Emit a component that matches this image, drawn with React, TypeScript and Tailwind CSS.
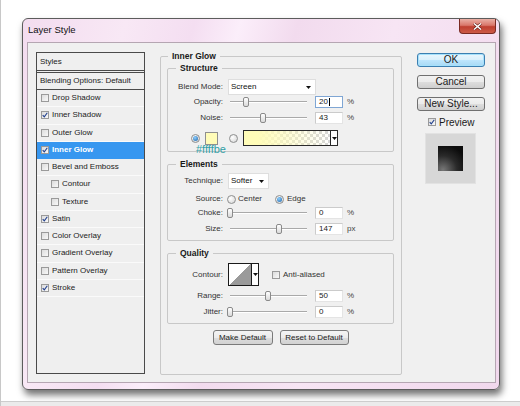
import React from "react";

type StyleItem = { label: string; checked: boolean; indent?: boolean; active?: boolean };

const STYLE_ITEMS: StyleItem[] = [
  { label: "Drop Shadow", checked: false },
  { label: "Inner Shadow", checked: true },
  { label: "Outer Glow", checked: false },
  { label: "Inner Glow", checked: true, active: true },
  { label: "Bevel and Emboss", checked: false },
  { label: "Contour", checked: false, indent: true },
  { label: "Texture", checked: false, indent: true },
  { label: "Satin", checked: true },
  { label: "Color Overlay", checked: false },
  { label: "Gradient Overlay", checked: false },
  { label: "Pattern Overlay", checked: false },
  { label: "Stroke", checked: true },
];

function Check({ checked, className = "" }: { checked: boolean; className?: string }) {
  return (
    <span
      className={`flex h-[8px] w-[8px] shrink-0 items-center justify-center border border-[#9a9a9a] bg-[linear-gradient(135deg,#dcdcdc,#f8f8f8)] ${className}`}
    >
      {checked && (
        <svg width="6" height="6" viewBox="0 0 6 6">
          <path d="M0.7 3.1 L2.3 4.9 L5.3 0.7" fill="none" stroke="#22418f" strokeWidth="1.1" />
        </svg>
      )}
    </span>
  );
}

function Radio({ on, className = "" }: { on?: boolean; className?: string }) {
  return (
    <span
      className={`flex h-[9px] w-[9px] shrink-0 items-center justify-center rounded-full border border-[#8e8f8f] bg-[radial-gradient(circle_at_35%_35%,#ffffff,#d3d3d3)] ${className}`}
    >
      {on && <span className="h-[5px] w-[5px] rounded-full bg-[radial-gradient(circle_at_40%_35%,#8fd0ff,#1b62a8)]" />}
    </span>
  );
}

function Arrow() {
  return (
    <svg width="5" height="3" viewBox="0 0 5 3">
      <path d="M0 0h5L2.5 3z" fill="#111" />
    </svg>
  );
}

function Slider({ pos }: { pos: number }) {
  return (
    <div className="relative h-[12px] w-[77px]">
      <div className="absolute left-0 right-0 top-[5px] h-[2px] border-t border-b border-t-[#a9a9a9] border-b-white" />
      <div
        className="absolute top-[1px] h-[10px] w-[6px] -translate-x-1/2 rounded-[2px] border border-[#8a8a8a] bg-[linear-gradient(#ffffff,#d9d9d9)]"
        style={{ left: `${pos * 100}%` }}
      />
    </div>
  );
}

function Field({ value, focused }: { value: string; focused?: boolean }) {
  return (
    <div
      className={`flex h-[12px] w-[28px] items-center border bg-white pl-[3px] text-[8px] leading-none text-[#222] ${
        focused ? "border-[#7fa6d4]" : "border-[#e4e4e4] border-l-[#cbcbcb] border-t-[#cbcbcb]"
      }`}
    >
      {value}
      {focused && <span className="ml-px h-[8px] w-px bg-black" />}
    </div>
  );
}

function SliderRow({
  label,
  value,
  pos,
  unit,
  focused,
  className = "",
}: {
  label: string;
  value: string;
  pos: number;
  unit: string;
  focused?: boolean;
  className?: string;
}) {
  return (
    <div className={`flex h-[12px] items-center ${className}`}>
      <span className="w-[55px] text-right">{label}</span>
      <div className="ml-[7px]">
        <Slider pos={pos} />
      </div>
      <div className="ml-[8px]">
        <Field value={value} focused={focused} />
      </div>
      <span className="ml-[4px] text-[#444]">{unit}</span>
    </div>
  );
}

function Legend({ children, className = "" }: { children: React.ReactNode; className?: string }) {
  return (
    <legend className={`px-[4px] text-[8.5px] font-bold leading-[10px] text-[#1a1a1a] ${className}`}>{children}</legend>
  );
}

function SmallButton({ children, className = "" }: { children: React.ReactNode; className?: string }) {
  return (
    <div
      className={`flex h-[15px] items-center justify-center rounded-[3px] border border-[#7a7a7a] bg-[linear-gradient(#f4f4f4_0%,#ebebeb_50%,#dddddd_51%,#d2d2d2_100%)] text-[8px] text-[#222] ${className}`}
    >
      {children}
    </div>
  );
}

function WinButton({ children, primary, className = "" }: { children: React.ReactNode; primary?: boolean; className?: string }) {
  return (
    <div
      className={`flex h-[14px] w-[68px] items-center justify-center rounded-[3px] border text-[10px] leading-none text-[#1a1a1a] ${
        primary
          ? "border-[#3c7fb1] bg-[linear-gradient(#eaf6fd_0%,#d9f0fc_50%,#bee6fd_51%,#a7d9f5_100%)] shadow-[inset_0_0_0_1px_#a6e1fb]"
          : "border-[#707070] bg-[linear-gradient(#f2f2f2_0%,#ebebeb_50%,#dddddd_51%,#cfcfcf_100%)]"
      } ${className}`}
    >
      {children}
    </div>
  );
}

function StylesList() {
  return (
    <div className="flex h-[322px] w-[109px] shrink-0 flex-col border border-[#4a4a4a] bg-[#efefef] text-[8px] text-[#222]">
      <div className="flex h-[20px] items-center border-b-[3px] border-double border-[#4a4a4a] pl-[3px]">Styles</div>
      <div className="flex h-[17px] items-center border-b border-[#4a4a4a] pl-[3px]">Blending Options: Default</div>
      {STYLE_ITEMS.map((item) => (
        <div
          key={item.label}
          className={`flex h-[17.25px] items-center border-b ${
            item.active ? "border-[#3797f0] bg-[#3797f0] font-bold text-white" : "border-white/70"
          } ${item.indent ? "pl-[14px]" : "pl-[4px]"}`}
        >
          <Check checked={item.checked} className={item.active ? "bg-white" : ""} />
          <span className="ml-[3px]">{item.label}</span>
        </div>
      ))}
    </div>
  );
}

function InnerGlowPanel() {
  return (
    <fieldset className="ml-[15px] -mt-[1px] h-[324px] w-[242px] shrink-0 rounded-[2px] border border-[#c8c8c8] pl-[6px] text-[8px] text-[#333]">
      <Legend className="ml-[1px]">Inner Glow</Legend>

      <fieldset className="mt-[2px] w-[227px] rounded-[2px] border border-[#c8c8c8] pb-[5px]">
        <Legend className="ml-[8px]">Structure</Legend>
        <div className="mt-[6px] flex h-[16px] items-center">
          <span className="w-[55px] text-right">Blend Mode:</span>
          <div className="ml-[5px] flex h-[16px] w-[88px] items-center justify-between border border-[#dedede] bg-white pl-[2px] pr-[4px] text-[#111]">
            <span>Screen</span>
            <Arrow />
          </div>
        </div>
        <SliderRow className="mt-[1px]" label="Opacity:" value="20" pos={0.21} unit="%" focused />
        <SliderRow className="mt-[4px]" label="Noise:" value="43" pos={0.43} unit="%" />
        <div className="relative mt-[6px] flex h-[16px] items-center">
          <Radio on className="ml-[23px]" />
          <span className="ml-[5px] h-[13px] w-[13px] border border-[#8f8f8f] bg-[#fffcb8]" />
          <Radio className="ml-[11px]" />
          <div className="ml-[5px] flex h-[16px] w-[95px] border border-[#2a2a2a]">
            <div className="flex-1 bg-[repeating-conic-gradient(#d6d6d6_0_25%,#ffffff_0_50%)] bg-[length:6px_6px]">
              <div className="h-full w-full bg-[linear-gradient(to_right,#fffcb8_0%,#fffcb8_15%,rgba(255,252,184,0)_100%)]" />
            </div>
            <div className="flex w-[7px] items-center justify-center border-l border-[#2a2a2a] bg-white">
              <Arrow />
            </div>
          </div>
          <span className="absolute left-[28px] top-[14px] font-['Liberation_Sans',Arial,sans-serif] text-[11px] leading-[11px] text-[#2f9fa6]">
            #ffffbe
          </span>
        </div>
      </fieldset>

      <fieldset className="mt-[7px] w-[227px] rounded-[2px] border border-[#c8c8c8] pb-[5px]">
        <Legend className="ml-[8px]">Elements</Legend>
        <div className="mt-[4px] flex h-[16px] items-center">
          <span className="w-[55px] text-right">Technique:</span>
          <div className="ml-[5px] flex h-[16px] w-[41px] items-center justify-between border border-[#dedede] bg-white pl-[2px] pr-[4px] text-[#111]">
            <span>Softer</span>
            <Arrow />
          </div>
        </div>
        <div className="mt-[5px] flex h-[10px] items-center">
          <span className="w-[55px] text-right">Source:</span>
          <Radio className="ml-[4px]" />
          <span className="ml-[2px]">Center</span>
          <Radio on className="ml-[13px]" />
          <span className="ml-[3px]">Edge</span>
        </div>
        <SliderRow className="mt-[3px]" label="Choke:" value="0" pos={0} unit="%" />
        <SliderRow className="mt-[4px]" label="Size:" value="147" pos={0.64} unit="px" />
      </fieldset>

      <fieldset className="mt-[7px] w-[227px] rounded-[2px] border border-[#c8c8c8] pb-[5px]">
        <Legend className="ml-[8px]">Quality</Legend>
        <div className="mt-[5px] flex h-[23px] items-center">
          <span className="w-[55px] text-right">Contour:</span>
          <div className="ml-[5px] flex h-[23px] w-[31px] border border-[#1a1a1a] bg-white">
            <div className="w-[22px] bg-[linear-gradient(to_top_left,#9a9a9a_50%,#ffffff_50%)]" />
            <div className="flex flex-1 items-center justify-center border-l border-[#1a1a1a]">
              <Arrow />
            </div>
          </div>
          <Check checked={false} className="ml-[13px]" />
          <span className="ml-[3px]">Anti-aliased</span>
        </div>
        <SliderRow className="mt-[4px]" label="Range:" value="50" pos={0.49} unit="%" />
        <SliderRow className="mt-[4px]" label="Jitter:" value="0" pos={0} unit="%" />
      </fieldset>

      <div className="mt-[6px] flex w-[227px] justify-center gap-[7px]">
        <SmallButton className="w-[60px]">Make Default</SmallButton>
        <SmallButton className="w-[69px]">Reset to Default</SmallButton>
      </div>
    </fieldset>
  );
}

function ActionColumn() {
  return (
    <div className="ml-[15px] mt-[1px] flex w-[68px] shrink-0 flex-col">
      <WinButton primary>OK</WinButton>
      <WinButton className="mt-[8px]">Cancel</WinButton>
      <WinButton className="mt-[8px]">New Style...</WinButton>
      <div className="mt-[6px] flex h-[10px] items-center pl-[11px] text-[10px] text-[#1a1a1a]">
        <Check checked />
        <span className="ml-[3px]">Preview</span>
      </div>
      <div className="ml-[8px] mt-[6px] flex h-[51px] w-[51px] items-center justify-center border border-[#e2e2e2] bg-[#d7d7d7]">
        <div className="h-[25px] w-[25px] bg-[radial-gradient(circle_at_20%_95%,#777777_0%,#2a2a2a_45%,#0c0c0c_80%)]" />
      </div>
    </div>
  );
}

export default function App() {
  return (
    <div className="relative flex h-[406px] w-[520px] flex-col overflow-hidden border-l border-[#c8c8c8] bg-white font-['Liberation_Sans',Arial,sans-serif]">
      <div className="ml-[21px] mt-[18px]">
        <div className="flex h-[372px] w-[478px] flex-col rounded-[6px] border border-[#5c5c5c] bg-[linear-gradient(105deg,#f3dcef_0%,#f8e8f5_18%,#f4def1_30%,#fbeefa_38%,#f2dbee_48%,#f7e5f4_65%,#f1d8ed_100%)] shadow-[2px_5px_7px_rgba(0,0,0,0.55)]">
          <div className="flex h-[23px] items-start justify-between">
            <span className="ml-[5px] mt-[5px] text-[9.5px] leading-[12px] text-[#111]">Layer Style</span>
            <div className="mr-[3px] flex h-[15px] w-[37px] items-center justify-center rounded-b-[4px] border border-t-0 border-[#7a2a22] bg-[linear-gradient(#eab0a6_0%,#d9776a_45%,#bf4030_55%,#cc5a46_100%)]">
              <svg width="9" height="7" viewBox="0 0 9 7">
                <path d="M1 0.5 L8 6.5 M8 0.5 L1 6.5" stroke="#5a1a14" strokeWidth="2.6" />
                <path d="M1 0.5 L8 6.5 M8 0.5 L1 6.5" stroke="#ffffff" strokeWidth="1.5" />
              </svg>
            </div>
          </div>
          <div className="ml-[4px] flex h-[341px] w-[469px] border border-[#b5a6b2] bg-[#f0f0f0] pl-[8px] pt-[9px]">
            <StylesList />
            <InnerGlowPanel />
            <ActionColumn />
          </div>
        </div>
      </div>
      <div className="mt-auto h-[5px] border-t border-[#cdcdcd] bg-[#ebebeb]" />
    </div>
  );
}
